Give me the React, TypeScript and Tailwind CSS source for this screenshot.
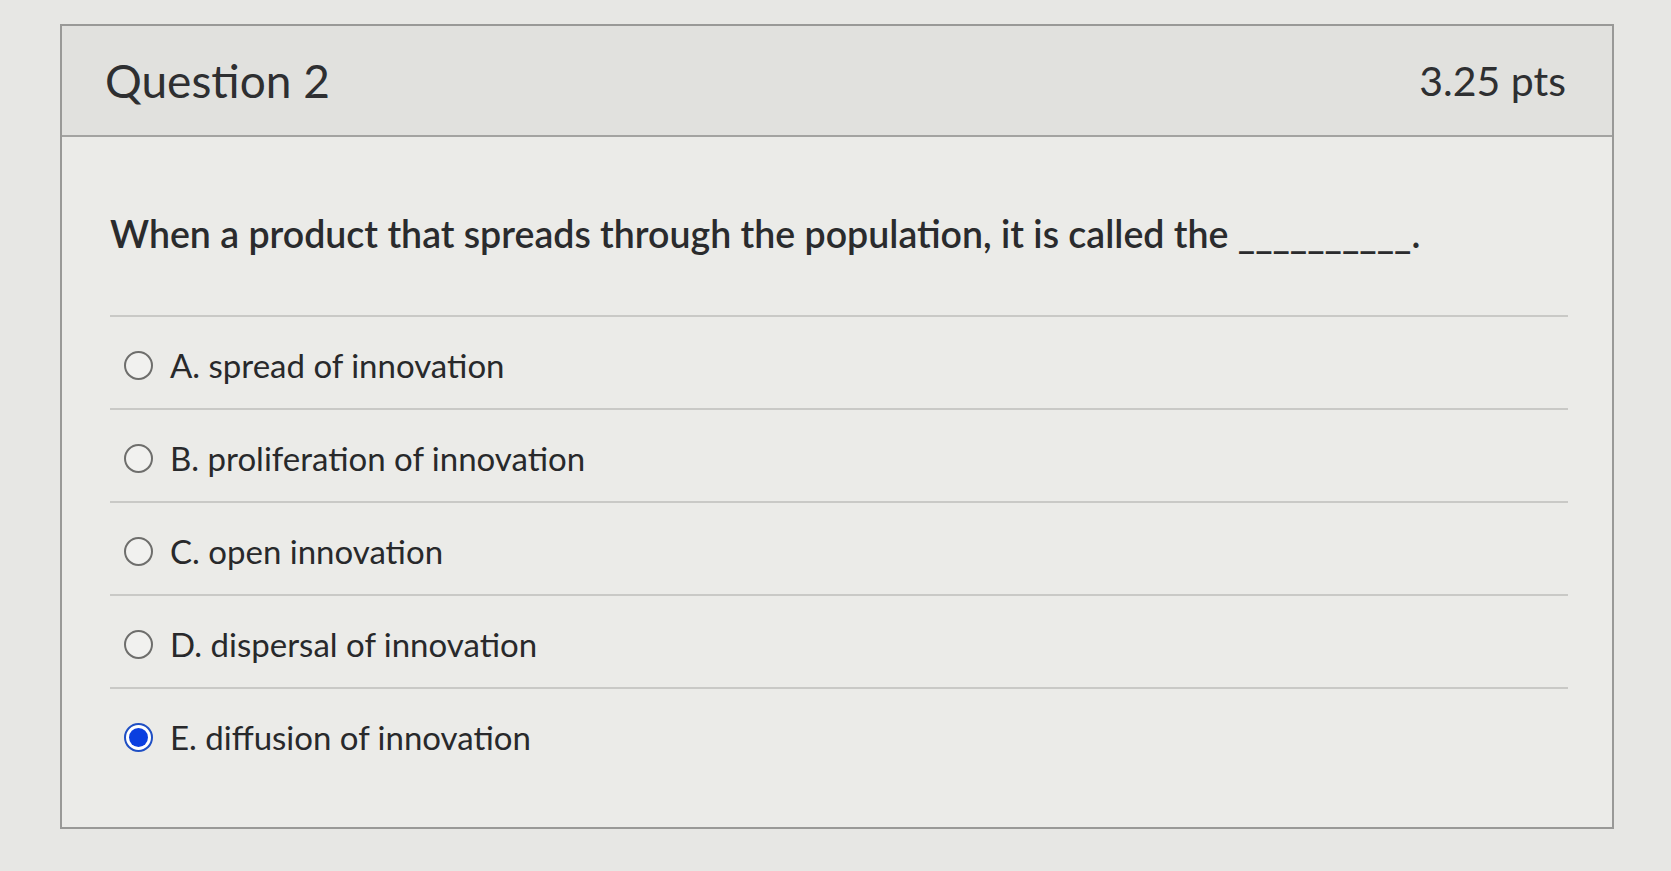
const options = [
  { id: "A", label: "A. spread of innovation" },
  { id: "B", label: "B. proliferation of innovation" },
  { id: "C", label: "C. open innovation" },
  { id: "D", label: "D. dispersal of innovation" },
  { id: "E", label: "E. diffusion of innovation" },
]

function Radio({ checked }: { checked: boolean }) {
  if (checked) {
    return (
      <span className="flex h-[29px] w-[29px] shrink-0 items-center justify-center rounded-full border-2 border-[#1f4fc4] bg-white">
        <span className="h-[19px] w-[19px] rounded-full bg-[#0b3fe0]" />
      </span>
    )
  }
  return <span className="h-[29px] w-[29px] shrink-0 rounded-full border-2 border-[#6e6e6c] bg-[#f1f1ef]" />
}

export default function App() {
  const selected = "E"
  return (
    <div className="h-[871px] w-full overflow-hidden bg-[#e7e7e4] pl-[60px] pt-[24px] font-['Lato',sans-serif] text-[#2e2f31]">
      <div className="w-[1554px] border-2 border-[#999997] bg-[#ebebe8]">
        <div className="flex h-[111px] items-center justify-between border-b-2 border-[#a3a3a1] bg-[#e1e1de] pl-[43px] pr-[46px]">
          <h2 className="text-[46px] leading-none">Question 2</h2>
          <span className="text-[41px] leading-none">3.25 pts</span>
        </div>
        <div className="pl-[48px] pr-[44px] pb-[47px] pt-[74px]">
          <p className="mb-[59px] text-[37.5px] font-semibold leading-[1.2] text-[#2a2b2d]">
            When a product that spreads through the population, it is called the __________.
          </p>
          {options.map((o) => (
            <div
              key={o.id}
              className="flex h-[93px] items-center gap-[17px] border-t-2 border-[#c9c9c6] pb-[2px] pl-[14px] pt-[8px]"
            >
              <Radio checked={o.id === selected} />
              <span className="text-[33px] leading-none text-[#28292b]">{o.label}</span>
            </div>
          ))}
        </div>
      </div>
    </div>
  )
}
